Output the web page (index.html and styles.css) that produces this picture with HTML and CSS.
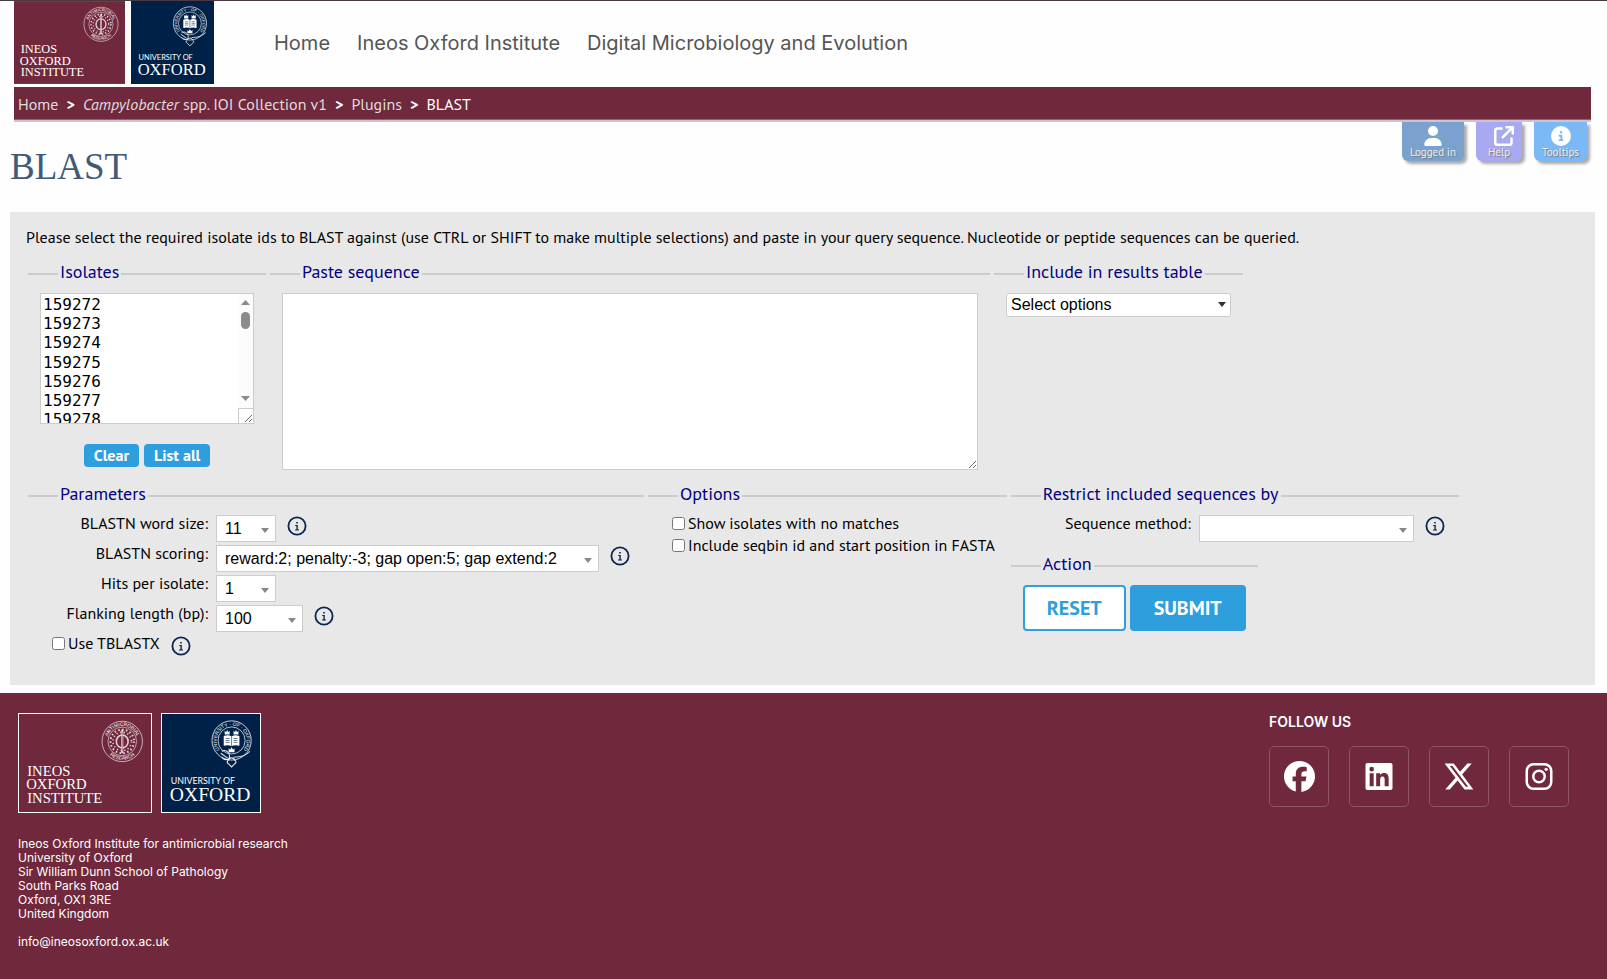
FILE: index.html
```
<!DOCTYPE html>
<html lang="en">
<head>
    <meta charset="UTF-8">
    <meta name="viewport" content="width=device-width, initial-scale=1.0">
    <title>BLAST</title>
    <link rel="stylesheet" href="styles.css">
</head>
<body>
    <!-- Shared icons and logos -->
    <svg class="sprite" aria-hidden="true">
        <symbol id="logo-ioi" viewBox="0 0 134 100">
            <rect width="134" height="100" fill="#70283c"/>
            <g fill="none" stroke="#fff" stroke-opacity=".8">
                <circle cx="105" cy="28" r="20.6" stroke-width=".8"/>
                <circle cx="105" cy="28" r="14.6" stroke-width=".7"/>
                <circle cx="105" cy="28" r="12" stroke-width="2" stroke-dasharray="1.6 2.4"/>
                <circle cx="105" cy="28" r="9.4" stroke-width="1.6" stroke-dasharray="1.2 2.6"/>
                <ellipse cx="105" cy="28" rx="6" ry="6.6" stroke-width="1.6"/>
                <path d="M105 16v24" stroke-width="2.2"/>
            </g>
            <path d="M105 18v20" stroke="#70283c" stroke-width=".6"/>
            <path id="ioi-top" d="M90.8 34.6a15.7 15.7 0 1 1 28.4 0" fill="none"/>
            <path id="ioi-bottom" d="M87 33.6a18.9 18.9 0 0 0 36 0" fill="none"/>
            <g class="seal-text">
                <text><textPath href="#ioi-top" startOffset="50%" text-anchor="middle">ANTIMICROBIAL</textPath></text>
                <text><textPath href="#ioi-bottom" startOffset="50%" text-anchor="middle">RESEARCH</textPath></text>
            </g>
            <g class="logo-serif">
                <text x="8" y="63">INEOS</text>
                <text x="7" y="77">OXFORD</text>
                <text x="8" y="91">INSTITUTE</text>
            </g>
        </symbol>
        <symbol id="logo-oxford" viewBox="0 0 100 100">
            <rect width="100" height="100" fill="#002147"/>
            <g fill="none" stroke="#fff" stroke-opacity=".9">
                <circle cx="71" cy="27" r="20" stroke-width=".9"/>
                <circle cx="71" cy="27" r="13.8" stroke-width=".8"/>
                <path d="M61 38c4-2 8 1 8 5s-5 5-8 1M60 40l7 5M68 47c0-3 6-3 6 0 2 1 2 3 0 4l-3 3-3-3c-2-1-2-3 0-4z" stroke-width="1.1"/>
                <path d="M73 44c6 0 12-1 17-6" stroke-width="1"/>
            </g>
            <path d="M63 22.500c3-1 6-1 8 .4 2-1.400 5-1.400 8-.4v10c-3-1-6-1-8 .4-2-1.400-5-1.400-8-.4zM64 17l1.500 1.500L66.500 16l1 2.500L69 17v4h-5zM73 17l1.500 1.500 1-2.500 1 2.500L78 17v4h-5zM68 35l1.500 1.500 1.500-2.500 1.500 2.500L74 35v4h-6z" fill="#fff"/>
            <path d="M71 23v10M65 25h4M65 27h4M65 29h4M73 25h4M73 27h4M73 29h4" stroke="#002147" stroke-width=".6"/>
            <path id="ox-top" d="M61.500 39a15.200 15.200 0 1 1 19 0" fill="none"/>
            <text class="seal-text"><textPath href="#ox-top" startOffset="50%" text-anchor="middle">UNIVERSITY · OF · OXFORD</textPath></text>
            <text class="logo-sans" x="9" y="71">UNIVERSITY OF</text>
            <text class="logo-oxford" x="8" y="89">OXFORD</text>
        </symbol>
        <symbol id="icon-info" viewBox="0 0 20 20">
            <circle cx="10" cy="10" r="8.600" fill="none" stroke="#0a2550" stroke-width="1.800"/>
            <path d="M9.200 6h1.600v1.600H9.200zM8.200 9h2.600v4.500H12v1H8v-1h1.400V10H8.200z" fill="#0a2550"/>
        </symbol>
    </svg>

    <header class="site-header">
        <div class="logos">
            <svg class="logo-wide" role="img" aria-label="Ineos Oxford Institute"><use href="#logo-ioi"/></svg>
            <svg class="logo-square" role="img" aria-label="University of Oxford"><use href="#logo-oxford"/></svg>
        </div>
        <nav class="main-nav">
            <a href="#">Home</a>
            <a href="#">Ineos Oxford Institute</a>
            <a href="#">Digital Microbiology and Evolution</a>
        </nav>
    </header>

    <nav class="breadcrumb" aria-label="Breadcrumb">
        <a href="#">Home</a>
        <span class="sep">&gt;</span>
        <a href="#"><i>Campylobacter</i> spp. IOI Collection v1</a>
        <span class="sep">&gt;</span>
        <a href="#">Plugins</a>
        <span class="sep">&gt;</span>
        <span class="current">BLAST</span>
    </nav>

    <div class="title-bar">
        <h1>BLAST</h1>
        <div class="tabs">
            <a class="tab tab-login" href="#">
                <svg viewBox="0 0 448 512"><path d="M224 256a128 128 0 1 0 0-256 128 128 0 1 0 0 256zm-45.700 48C79.800 304 0 383.800 0 482.300 0 498.700 13.300 512 29.700 512h388.600c16.400 0 29.700-13.300 29.700-29.700C448 383.800 368.200 304 269.700 304h-91.400z"/></svg>
                <span>Logged in</span>
            </a>
            <a class="tab tab-help" href="#">
                <svg viewBox="0 0 512 512"><path d="M320 0c-17.700 0-32 14.300-32 32s14.300 32 32 32h82.700L201.400 265.400c-12.500 12.500-12.500 32.800 0 45.300s32.800 12.500 45.300 0L448 109.300V192c0 17.700 14.300 32 32 32s32-14.300 32-32V32c0-17.700-14.300-32-32-32H320zM80 32C35.800 32 0 67.800 0 112v320c0 44.200 35.800 80 80 80h320c44.200 0 80-35.800 80-80V320c0-17.700-14.300-32-32-32s-32 14.300-32 32v112c0 8.800-7.200 16-16 16H80c-8.800 0-16-7.200-16-16V112c0-8.800 7.200-16 16-16h112c17.700 0 32-14.300 32-32s-14.300-32-32-32H80z"/></svg>
                <span>Help</span>
            </a>
            <a class="tab tab-tooltips" href="#">
                <svg viewBox="0 0 512 512"><path d="M256 512a256 256 0 1 0 0-512 256 256 0 1 0 0 512zm-40-176h24v-64h-24c-13.300 0-24-10.700-24-24s10.700-24 24-24h48c13.300 0 24 10.700 24 24v88h8c13.300 0 24 10.700 24 24s-10.700 24-24 24h-80c-13.300 0-24-10.700-24-24s10.700-24 24-24zm40-208a32 32 0 1 1 0 64 32 32 0 1 1 0-64z"/></svg>
                <span>Tooltips</span>
            </a>
        </div>
    </div>

    <main class="panel">
        <p>Please select the required isolate ids to BLAST against (use CTRL or SHIFT to make multiple selections) and paste in your query sequence. Nucleotide or peptide sequences can be queried.</p>

        <form>
            <div class="form-row">
                <fieldset>
                    <legend>Isolates</legend>
                    <div class="list-wrap">
                        <select id="isolates" class="isolate-list" multiple aria-label="Isolates"></select>
                        <svg class="scrollbar" viewBox="0 0 15 129" aria-hidden="true">
                            <path d="M0 0h15v114H0z" fill="#fcfcfc"/>
                            <path d="M3 11h9L7.500 6zM3 102h9l-4.500 5z" fill="#8b8b8b"/>
                            <rect x="3" y="18" width="9" height="17" rx="4.500" fill="#8b8b8b"/>
                            <path d="M15 114.500H.5V129" fill="none" stroke="#ccc"/>
                        </svg>
                    </div>
                    <div class="list-buttons">
                        <button type="button" class="small-btn">Clear</button>
                        <button type="button" class="small-btn">List all</button>
                    </div>
                </fieldset>
                <fieldset>
                    <legend>Paste sequence</legend>
                    <textarea class="sequence" aria-label="Paste sequence"></textarea>
                </fieldset>
                <fieldset>
                    <legend>Include in results table</legend>
                    <select class="multi" aria-label="Include in results table">
                        <option>Select options</option>
                    </select>
                </fieldset>
            </div>

            <div class="form-row">
                <fieldset>
                    <legend>Parameters</legend>
                    <div class="field">
                        <label for="word_size">BLASTN word size:</label>
                        <select id="word_size" class="w-small"><option>11</option></select>
                        <svg class="info"><use href="#icon-info"/></svg>
                    </div>
                    <div class="field">
                        <label for="scores">BLASTN scoring:</label>
                        <select id="scores" class="w-large"><option>reward:2; penalty:-3; gap open:5; gap extend:2</option></select>
                        <svg class="info"><use href="#icon-info"/></svg>
                    </div>
                    <div class="field">
                        <label for="hits">Hits per isolate:</label>
                        <select id="hits" class="w-small"><option>1</option></select>
                    </div>
                    <div class="field">
                        <label for="flanking">Flanking length (bp):</label>
                        <select id="flanking" class="w-medium"><option>100</option></select>
                        <svg class="info"><use href="#icon-info"/></svg>
                    </div>
                    <div class="check">
                        <input type="checkbox" id="tblastx">
                        <label for="tblastx">Use TBLASTX</label>
                        <svg class="info"><use href="#icon-info"/></svg>
                    </div>
                </fieldset>
                <fieldset class="options">
                    <legend>Options</legend>
                    <div class="check">
                        <input type="checkbox" id="show_no_match">
                        <label for="show_no_match">Show isolates with no matches</label>
                    </div>
                    <div class="check">
                        <input type="checkbox" id="include_seqbin">
                        <label for="include_seqbin">Include seqbin id and start position in FASTA</label>
                    </div>
                </fieldset>
                <div class="form-column">
                    <fieldset class="restrict">
                        <legend>Restrict included sequences by</legend>
                        <div class="field">
                            <label for="method">Sequence method:</label>
                            <select id="method" class="w-method"><option></option></select>
                            <svg class="info"><use href="#icon-info"/></svg>
                        </div>
                    </fieldset>
                    <fieldset>
                        <legend>Action</legend>
                        <div class="actions">
                            <button type="reset" class="reset">RESET</button>
                            <button type="submit" class="submit">SUBMIT</button>
                        </div>
                    </fieldset>
                </div>
            </div>
        </form>
    </main>

    <footer class="site-footer">
        <div>
            <div class="logos">
                <svg class="logo-wide" role="img" aria-label="Ineos Oxford Institute"><use href="#logo-ioi"/></svg>
                <svg class="logo-square" role="img" aria-label="University of Oxford"><use href="#logo-oxford"/></svg>
            </div>
            <address>
                Ineos Oxford Institute for antimicrobial research<br>
                University of Oxford<br>
                Sir William Dunn School of Pathology<br>
                South Parks Road<br>
                Oxford, OX1 3RE<br>
                United Kingdom
            </address>
            <a class="email" href="mailto:info@ineosoxford.ox.ac.uk">info@ineosoxford.ox.ac.uk</a>
        </div>
        <div class="follow">
            <h2>FOLLOW US</h2>
            <div class="social">
                <a href="#" aria-label="Facebook"><svg class="round" viewBox="0 0 512 512"><path d="M512 256C512 114.600 397.400 0 256 0S0 114.600 0 256c0 120 82.700 220.800 194.200 248.500V334.200h-52.800V256h52.800v-33.700c0-87.100 39.400-127.500 125-127.500 16.200 0 44.200 3.200 55.700 6.400V172c-6-.6-16.500-1-29.600-1-42 0-58.200 15.900-58.200 57.200V256h83.600l-14.400 78.200h-69.300v175.900C413.800 494.800 512 386.900 512 256z"/></svg></a>
                <a href="#" aria-label="LinkedIn"><svg viewBox="0 32 448 448"><path d="M416 32H31.900C14.300 32 0 46.500 0 64.300v383.400C0 465.500 14.300 480 31.900 480H416c17.600 0 32-14.500 32-32.300V64.300c0-17.800-14.400-32.300-32-32.300zM135.400 416H69V202.200h66.500V416zM102.200 96a38.500 38.500 0 1 1 0 77 38.500 38.500 0 1 1 0-77zM384.300 416h-66.400V312c0-24.800-.5-56.700-34.500-56.700-34.600 0-39.900 27-39.900 54.900V416h-66.400V202.200h63.700v29.200h.9c8.900-16.800 30.600-34.500 62.900-34.500 67.200 0 79.700 44.300 79.700 101.900V416z"/></svg></a>
                <a href="#" aria-label="X"><svg viewBox="32 48 448 416"><path d="M389.200 48h70.600L305.600 224.200 487 464H345L233.700 318.600 106.500 464H35.800l164.900-188.500L26.800 48h145.600l100.500 132.900L389.200 48zm-24.800 373.800h39.100L151.100 88h-42l255.300 333.800z"/></svg></a>
                <a href="#" aria-label="Instagram"><svg viewBox="0 32 448 448"><path fill-rule="evenodd" d="M132 32h184a132 132 0 0 1 132 132v184a132 132 0 0 1-132 132H132A132 132 0 0 1 0 348V164A132 132 0 0 1 132 32zm4 40a94 94 0 0 0-94 94v180a94 94 0 0 0 94 94h176a94 94 0 0 0 94-94V166a94 94 0 0 0-94-94H136zM224 141a115 115 0 1 1 0 230 115 115 0 1 1 0-230zm0 40a75 75 0 1 0 0 150 75 75 0 1 0 0-150z"/><circle cx="343" cy="136" r="27"/></svg></a>
            </div>
        </div>
    </footer>

    <script>
        // Fill the isolate list
        const isolates = document.getElementById('isolates');
        for (let id = 159272; id < 159372; id++) {
            isolates.add(new Option(id, id));
        }
    </script>
</body>
</html>
```

FILE: styles.css
```
* {
    box-sizing: border-box;
}

body {
    margin: 0;
    min-height: 100vh;
    display: flex;
    flex-direction: column;
    border-top: 1px solid #4a3a40;
    background-color: #fefefe;
    color: #000;
    font-family: "PT Sans", "Noto Sans", sans-serif;
    font-size: 16px;
    line-height: 22px;
}

a {
    color: inherit;
    text-decoration: none;
}

svg {
    display: block;
}

.sprite {
    position: absolute;
    width: 0;
    height: 0;
}

.seal-text {
    fill: #fff;
    font-family: "Liberation Sans", sans-serif;
    font-size: 5px;
}

.logo-serif {
    fill: #fff;
    font-family: "Liberation Serif", serif;
    font-size: 15px;
}

.logo-sans {
    fill: #fff;
    font-family: Lato, sans-serif;
    font-size: 9px;
}

.logo-oxford {
    fill: #fff;
    font-family: "Liberation Serif", serif;
    font-size: 20px;
}

/* Header */

.site-header {
    display: flex;
    align-items: center;
    gap: 60px;
    height: 86px;
    padding: 0 14px 3px;
}

.logos {
    display: flex;
    gap: 6px;
}

.logo-wide {
    width: 111px;
    height: 83px;
}

.logo-square {
    width: 83px;
    height: 83px;
}

.main-nav {
    display: flex;
    gap: 27px;
    color: #555;
    font-family: Inter, sans-serif;
    font-size: 20px;
}

.breadcrumb {
    display: flex;
    align-items: center;
    gap: 8px;
    height: 33px;
    margin: 0 16px 0 14px;
    padding: 2px 4px 0;
    background-color: #70283c;
    border-bottom: 1px solid #8d6273;
    box-shadow: 0 2px 0 #ccc3d0;
    color: #ddd;
}

.breadcrumb .sep,
.breadcrumb .current {
    color: #fff;
}

.breadcrumb .sep {
    font-weight: bold;
}

.title-bar {
    display: flex;
    justify-content: space-between;
    align-items: flex-start;
    height: 92px;
    padding: 2px 20px 0 10px;
}

h1 {
    margin: 24px 0 0;
    color: #425a78;
    font-family: "Liberation Serif", serif;
    font-size: 37px;
    font-weight: normal;
    line-height: 42px;
}

.tabs {
    display: flex;
    gap: 12px;
}

.tab {
    display: flex;
    flex-direction: column;
    align-items: center;
    height: 39px;
    padding: 4px 8px 0;
    border-radius: 0 0 6px 6px;
    box-shadow: 3px 3px 3px #aaa;
    color: #eee;
    font-size: 11px;
    line-height: 12px;
    text-shadow: 1px 1px 1px #777;
}

.tab svg {
    height: 20px;
    width: 20px;
    fill: #fff;
}

.tab-login {
    background-color: #7ba2cf;
}

.tab-help {
    background-color: #a9a9f2;
}

.tab-help svg {
    margin-left: 10px;
}

.tab-tooltips {
    background-color: #7ab8f6;
}

/* Form panel */

.panel {
    margin: 0 12px 8px 10px;
    padding: 14px 18px 28px;
    background-color: #e8e8e8;
}

.panel p {
    margin: 0 0 15px -2px;
}

.form-row {
    display: flex;
    flex-wrap: wrap;
    align-items: flex-start;
    gap: 4px;
}

.form-row + .form-row {
    margin-top: 15px;
}

fieldset {
    margin: 0;
    min-width: 0;
    padding: 8px 12px 0;
    border: 0;
    border-top: 2px solid #ccc;
}

legend {
    margin-left: 18px;
    padding: 0 2px 4px;
    color: navy;
    font-size: 18px;
    line-height: 18px;
}

select,
textarea {
    border: 1px solid #ccc;
    border-radius: 0;
    background-color: #fff;
    color: #000;
    font-family: "Liberation Sans", Arial, sans-serif;
    font-size: 16px;
}

.list-wrap {
    position: relative;
}

.isolate-list {
    display: block;
    width: 214px;
    height: 131px;
    padding: 1px 0;
    font-family: "DejaVu Sans Mono", monospace;
    resize: both;
    overflow: auto;
    scrollbar-width: none;
}

.isolate-list option {
    padding: 0 2px;
}

.scrollbar {
    position: absolute;
    top: 1px;
    right: 1px;
    width: 15px;
    height: 129px;
    pointer-events: none;
}

.list-buttons {
    display: flex;
    justify-content: center;
    gap: 5px;
    margin-top: 20px;
}

button {
    border: 0;
    border-radius: 4px;
    background-color: #2f9edc;
    color: #fff;
    font-family: inherit;
    font-weight: bold;
    cursor: pointer;
}

.small-btn {
    height: 23px;
    padding: 0 10px 2px;
    font-size: 16px;
    line-height: 20px;
}

.sequence {
    display: block;
    width: 696px;
    height: 177px;
}

.field {
    display: flex;
    gap: 8px;
    height: 30px;
}

.field label {
    width: 168px;
    line-height: 16px;
    text-align: right;
}

.field select,
.multi {
    appearance: none;
    background: #fff url("data:image/svg+xml,%3Csvg xmlns='http://www.w3.org/2000/svg' width='8' height='5'%3E%3Cpath d='M0 0h8L4 5z' fill='%23888'/%3E%3C/svg%3E") no-repeat right 6px top 12px;
}

.field select {
    height: 27px;
    padding: 0 8px;
}

.multi {
    display: block;
    width: 225px;
    height: 24px;
    padding: 0 4px 2px;
    border-radius: 3px;
    background-image: url("data:image/svg+xml,%3Csvg xmlns='http://www.w3.org/2000/svg' width='8' height='5'%3E%3Cpath d='M0 0h8L4 5z' fill='%23333'/%3E%3C/svg%3E");
    background-position: right 4px top 8px;
}

.w-small {
    width: 60px;
}

.w-medium {
    width: 87px;
}

.w-large {
    width: 383px;
}

.w-method {
    width: 215px;
}

.info {
    width: 20px;
    height: 20px;
    margin: 1px 2px 0 3px;
}

.check {
    display: flex;
    align-items: flex-start;
    gap: 3px;
    height: 22px;
    padding-left: 12px;
}

.check input {
    width: 13px;
    height: 13px;
    margin: 2px 0 0;
}

.check label {
    line-height: 16px;
}

.check .info {
    margin-left: 8px;
}

.restrict {
    width: 448px;
}

.form-column {
    display: flex;
    flex-direction: column;
    align-items: flex-start;
    gap: 10px;
}

.actions {
    display: flex;
    gap: 4px;
}

.actions button {
    height: 46px;
    padding: 0 22px;
    border: 2px solid #2f9edc;
    font-size: 20px;
}

.actions .reset {
    background-color: #fff;
    color: #2f9edc;
}

/* Footer */

.site-footer {
    display: flex;
    justify-content: space-between;
    flex: 1;
    padding: 20px 38px 20px 18px;
    background-color: #70283c;
    color: #fff;
    font-family: Inter, sans-serif;
    font-size: 12px;
    line-height: 14px;
}

.site-footer .logos {
    gap: 9px;
}

.site-footer .logo-wide,
.site-footer .logo-square {
    border: 1px solid #fff;
    width: 134px;
    height: 100px;
}

.site-footer .logo-square {
    width: 100px;
}

address {
    margin: 24px 0 14px;
    font-style: normal;
}

.follow h2 {
    margin: 0 0 15px;
    font-size: 14px;
    font-weight: 600;
    line-height: 18px;
}

.social {
    display: flex;
    gap: 20px;
}

.social a {
    display: flex;
    align-items: center;
    justify-content: center;
    width: 60px;
    height: 61px;
    border: 1px solid #8d5465;
    border-radius: 5px;
}

.social svg {
    width: 28px;
    height: 27px;
    fill: #fff;
}

.social .round {
    width: 31px;
    height: 31px;
}
```
